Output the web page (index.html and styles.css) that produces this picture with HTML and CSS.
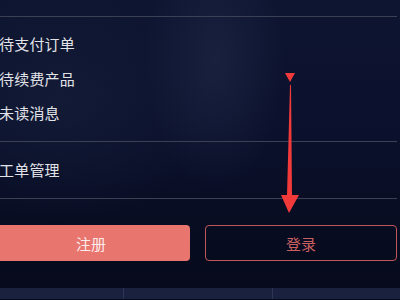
FILE: index.html
```html
<!DOCTYPE html>
<html>
<head>
<meta charset="utf-8">
<link rel="stylesheet" href="styles.css">
</head>
<body>
<div class="page">
  <div class="divider first"></div>
  <div class="group">
    <div class="item">待支付订单</div>
    <div class="item">待续费产品</div>
    <div class="item">未读消息</div>
  </div>
  <div class="divider"></div>
  <div class="group single">
    <div class="item">工单管理</div>
  </div>
  <div class="divider"></div>
  <div class="actions">
    <button class="btn register">注册</button>
    <button class="btn login">登录</button>
  </div>
  <div class="tabbar">
    <div class="tab t1"></div>
    <div class="tab t2"></div>
    <div class="tab t3"></div>
  </div>
  <svg class="arrow" width="20" height="150" viewBox="0 0 20 150">
    <polygon points="5,0 15,0 10,9" fill="#f23a3a"/>
    <polygon points="10,12 11,12 12,122 19,122 9,140 1,122 7,122" fill="#f23a3a"/>
  </svg>
</div>
</body>
</html>
```
FILE: styles.css
```css
html, body {
  margin: 0;
  padding: 0;
  width: 400px;
  height: 300px;
  overflow: hidden;
}
body {
  background: radial-gradient(ellipse 70px 130px at 215px 60px, rgba(26,34,64,0.9) 0%, rgba(26,34,64,0) 100%),
              radial-gradient(ellipse 160px 120px at 60px 100px, rgba(20,28,56,0.8) 0%, rgba(20,28,56,0) 100%),
              linear-gradient(180deg, #0e1531 0%, #0b112c 45%, #070b1e 85%, #060a1b 100%);
  font-family: "Noto Sans CJK SC", "Noto Sans", sans-serif;
  color: #e2e3e8;
}
.page {
  position: relative;
  width: 400px;
  height: 300px;
  display: flex;
  flex-direction: column;
}
.divider {
  height: 1px;
  background: #3b4054;
  margin-right: 3px;
}
.divider.first {
  margin-top: 16px;
}
.group {
  display: flex;
  flex-direction: column;
  padding: 16px 0 17px 0;
  gap: 12.5px;
}
.group.single {
  padding: 17px 0 17px 0;
}
.item {
  font-size: 15px;
  line-height: 22px;
  height: 22px;
  margin-left: -1px;
  letter-spacing: 0.2px;
}
.actions {
  display: flex;
  margin-top: 26px;
  margin-left: -8px;
  gap: 15px;
}
.btn {
  height: 36px;
  font-family: "Noto Sans CJK SC", "Noto Sans", sans-serif;
  font-size: 15px;
  border-radius: 4px;
  padding: 0;
  box-sizing: border-box;
}
.register {
  width: 198px;
  background: #e8766f;
  border: none;
  color: #fbecec;
}
.login {
  width: 192px;
  background: transparent;
  border: 1.5px solid #bf5759;
  color: #cc6061;
}
.tabbar {
  margin-top: 27px;
  height: 11px;
  display: flex;
  background: #19213f;
}
.tab {
  height: 100%;
}
.t1 { width: 123px; border-right: 1px solid #2c3555; }
.t2 { width: 148px; border-right: 1px solid #2c3555; }
.t3 { flex: 1; }
.arrow {
  position: absolute;
  left: 280px;
  top: 73px;
}
```
